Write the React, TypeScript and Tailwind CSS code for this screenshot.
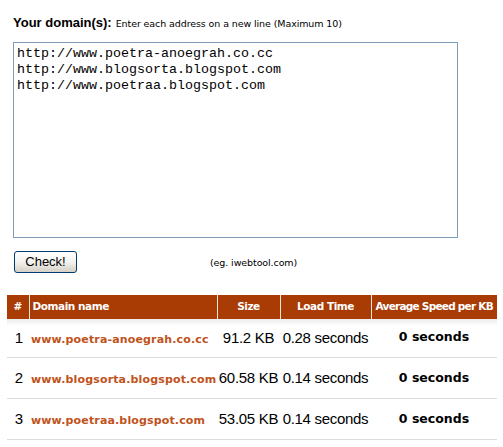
const domains = [
  "http://www.poetra-anoegrah.co.cc",
  "http://www.blogsorta.blogspot.com",
  "http://www.poetraa.blogspot.com",
];

const results = [
  { n: 1, name: "www.poetra-anoegrah.co.cc", size: "91.2 KB", time: "0.28 seconds" },
  { n: 2, name: "www.blogsorta.blogspot.com", size: "60.58 KB", time: "0.14 seconds" },
  { n: 3, name: "www.poetraa.blogspot.com", size: "53.05 KB", time: "0.14 seconds" },
];

const App = () => {
  return (
    <div className="w-[503px] h-[447px] bg-white overflow-hidden font-['Liberation_Sans',Arial,sans-serif] text-black">
      <div className="pl-[13px] pt-[13px] flex items-baseline">
        <span className="text-[13px] font-bold">Your domain(s):</span>
        <span className="ml-[4px] text-[9.5px] font-['DejaVu_Sans',Verdana,sans-serif] tracking-[-0.1px]">
          Enter each address on a new line (Maximum 10)
        </span>
      </div>

      <textarea
        readOnly
        defaultValue={domains.join("\n")}
        className="block ml-[13px] mt-[9px] w-[445px] h-[196px] border border-[#7f9db9] px-[3px] pt-[3px] pb-[1px] font-['Liberation_Mono','Courier_New',monospace] text-[13.33px] leading-[16px] resize-none outline-none"
      />

      <div className="flex items-center mt-[13px] ml-[14px]">
        <button className="w-[63px] h-[22px] rounded-[3px] border border-[#003c74] bg-gradient-to-b from-white via-[#f2f2ee] to-[#d6d0c5] text-[13px] leading-none pb-[1px]">
          Check!
        </button>
        <span className="ml-[133px] mt-[4px] text-[9.5px] font-['DejaVu_Sans',Verdana,sans-serif] tracking-[-0.1px]">
          (eg. iwebtool.com)
        </span>
      </div>

      <table className="ml-[7px] mt-[22px] w-[490px] border-collapse table-fixed">
        <thead>
          <tr className="h-[24px] bg-[#a93b05] text-white text-[10.5px] font-bold font-['DejaVu_Sans',Verdana,sans-serif] tracking-[-0.45px]">
            <th className="w-[22px] text-center border-r border-[#f3e6d6] font-bold">#</th>
            <th className="w-[188px] text-left pl-[3px] border-r border-[#f3e6d6] font-bold">Domain name</th>
            <th className="w-[63px] text-center border-r border-[#f3e6d6] font-bold">Size</th>
            <th className="w-[91px] text-center border-r border-[#f3e6d6] font-bold">Load Time</th>
            <th className="text-center whitespace-nowrap font-bold tracking-[-0.75px]">Average Speed per KB</th>
          </tr>
        </thead>
        <tbody>
          {results.map((r, i) => (
            <tr
              key={r.n}
              className={`border-b border-[#dcdcdc] ${i === 0 ? "h-[39px] bg-gradient-to-b from-[#ececec] via-white to-white via-[18%]" : "h-[41px]"}`}
            >
              <td className="text-[15px] text-center pl-[2px]">{r.n}</td>
              <td className="pl-[2px] whitespace-nowrap">
                <a className="text-[#c0531c] font-bold text-[11px] font-['DejaVu_Sans',Verdana,sans-serif] tracking-[0.15px]">
                  {r.name}
                </a>
              </td>
              <td className="text-[15px] text-center whitespace-nowrap tracking-[-0.3px]">{r.size}</td>
              <td className="text-[15px] text-center whitespace-nowrap tracking-[-0.3px]">{r.time}</td>
              <td className="text-center font-bold text-[12.5px] font-['DejaVu_Sans',Verdana,sans-serif]">0 seconds</td>
            </tr>
          ))}
        </tbody>
      </table>
    </div>
  );
};

export default App;
